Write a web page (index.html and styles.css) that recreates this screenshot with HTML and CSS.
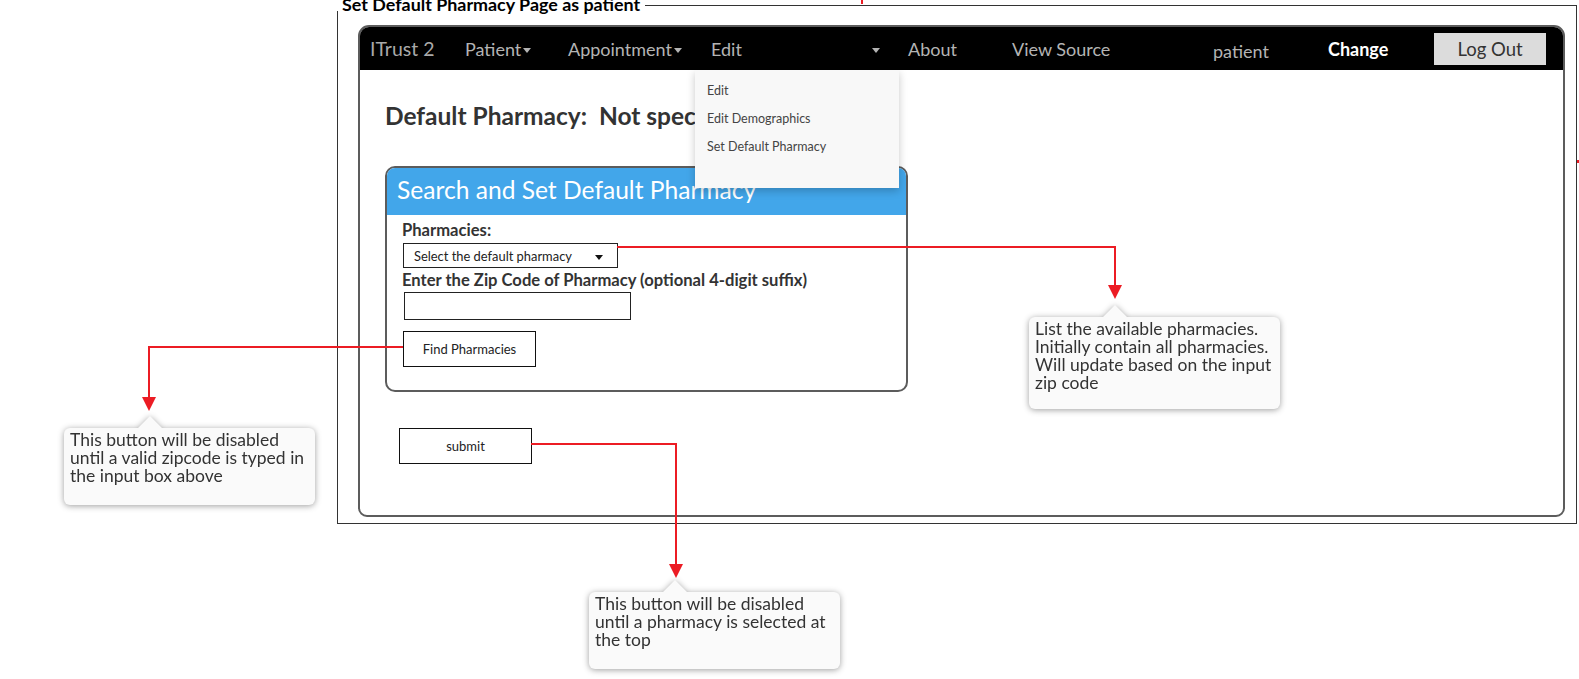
FILE: index.html
```html
<!DOCTYPE html>
<html lang="en">
<head>
<meta charset="utf-8">
<title>Set Default Pharmacy Page as patient</title>
<link rel="stylesheet" href="styles.css">
</head>
<body>
<div class="canvas">
  <div class="frame">
    <div class="frame-title">Set Default Pharmacy Page as patient</div>
    <div class="app">
      <nav class="navbar">
        <span class="nav-item n-brand">ITrust 2</span>
        <span class="nav-item n-patient">Patient<i class="caret"></i></span>
        <span class="nav-item n-appt">Appointment<i class="caret"></i></span>
        <span class="nav-item n-edit">Edit</span>
        <span class="nav-item n-caret"><i class="caret"></i></span>
        <span class="nav-item n-about">About</span>
        <span class="nav-item n-source">View Source</span>
        <span class="nav-item n-user">patient</span>
        <span class="nav-item n-change">Change</span>
        <span class="logout">Log Out</span>
      </nav>
      <div class="content">
        <h1 class="heading">Default Pharmacy:&nbsp; Not specified</h1>
        <div class="panel">
          <div class="panel-head">Search and Set Default Pharmacy</div>
          <div class="panel-body">
            <div class="label">Pharmacies:</div>
            <div class="select"><span>Select the default pharmacy</span><i class="caret caret-dark"></i></div>
            <div class="label label-zip">Enter the Zip Code of Pharmacy (optional 4-digit suffix)</div>
            <input class="zip" type="text">
            <button class="btn btn-find">Find Pharmacies</button>
          </div>
        </div>
        <button class="btn btn-submit">submit</button>
      </div>
      <div class="menu">
        <div class="menu-item">Edit</div>
        <div class="menu-item">Edit Demographics</div>
        <div class="menu-item">Set Default Pharmacy</div>
      </div>
    </div>
  </div>

  <svg class="wires" width="1579" height="679" viewBox="0 0 1579 679">
    <g fill="none" stroke="#ec1c24" stroke-width="2">
      <polyline points="617,247 1115,247 1115,286"/>
      <polyline points="403,347 149,347 149,398"/>
      <polyline points="531,444 676,444 676,565"/>
      <line x1="862" y1="0" x2="862" y2="4"/>
    </g>
    <g fill="#ec1c24">
      <polygon points="1108,285 1122,285 1115,299"/>
      <polygon points="142,397 156,397 149,411"/>
      <polygon points="669,564 683,564 676,578"/>
      <rect x="1577" y="160" width="2" height="3"/>
    </g>
  </svg>

  <div class="callout callout-list">List the available pharmacies.<br>Initially contain all pharmacies.<br>Will update based on the input<br>zip code</div>
  <div class="callout callout-find">This button will be disabled<br>until a valid zipcode is typed in<br>the input box above</div>
  <div class="callout callout-submit">This button will be disabled<br>until a pharmacy is selected at<br>the top</div>
</div>
</body>
</html>
```

FILE: styles.css
```css
html, body {
  margin: 0;
  padding: 0;
  background: #ffffff;
}

body {
  width: 1579px;
  height: 679px;
  overflow: hidden;
  font-family: "Lato", "Noto Sans", sans-serif;
  color: #333;
}

.canvas {
  position: relative;
  width: 1579px;
  height: 679px;
  box-sizing: border-box;
  padding: 5px 0 0 337px;
}

/* outer wireframe frame */
.frame {
  position: relative;
  width: 1240px;
  height: 519px;
  box-sizing: border-box;
  border: 1px solid #333;
  padding: 19px 0 0 20px;
}

.frame-title {
  position: absolute;
  left: -1px;
  top: -9px;
  padding: 0 5px 0 5px;
  background: #fff;
  font-weight: 700;
  font-size: 17.9px;
  line-height: 14px;
  color: #000;
  white-space: nowrap;
}

/* app window */
.app {
  position: relative;
  width: 1207px;
  height: 492px;
  box-sizing: border-box;
  border: 2px solid #5c5c5c;
  border-radius: 11px 11px 9px 9px;
  overflow: hidden;
  background: #fff;
}

.navbar {
  height: 43px;
  background: #000;
  display: flex;
  align-items: center;
  padding-left: 10px;
}

.nav-item {
  flex: none;
  font-size: 18px;
  line-height: 22px;
  color: #b4b4b4;
  white-space: nowrap;
}

.n-brand { width: 95px; color: #a9a9a9; font-size: 19.5px; }
.n-patient { width: 103px; }
.n-appt { width: 143px; }
.n-edit { width: 159px; }
.n-caret { width: 38px; }
.n-about { width: 104px; }
.n-source { width: 201px; }
.n-user { width: 115px; padding-top: 4px; }
.n-change { width: 106px; color: #fff; font-weight: 700; }

.caret {
  display: inline-block;
  width: 0;
  height: 0;
  margin-left: 2px;
  vertical-align: middle;
  border-top: 5px solid #b4b4b4;
  border-left: 4px solid transparent;
  border-right: 4px solid transparent;
}

.logout {
  flex: none;
  width: 112px;
  height: 32px;
  background: #dcdcdc;
  color: #333;
  font-size: 18.5px;
  line-height: 32px;
  text-align: center;
}

/* dropdown menu overlay */
.menu {
  position: absolute;
  left: 335px;
  top: 43px;
  width: 204px;
  height: 118px;
  box-sizing: border-box;
  padding-top: 7px;
  background: #f8f8f8;
  box-shadow: 0 3px 8px rgba(0, 0, 0, 0.22);
}

.menu-item {
  padding-left: 12px;
  font-size: 12.5px;
  line-height: 28px;
  color: #444;
}

/* page content */
.content {
  padding: 32px 0 0 25px;
}

.heading {
  margin: 0;
  font-size: 24.5px;
  line-height: 28px;
  font-weight: 700;
  color: #333;
  white-space: nowrap;
}

.panel {
  margin-top: 36px;
  width: 523px;
  height: 226px;
  box-sizing: border-box;
  border: 2px solid #5c5c5c;
  border-radius: 10px;
  overflow: hidden;
}

.panel-head {
  height: 47px;
  background: #42a6ea;
  color: #fff;
  font-size: 24.6px;
  line-height: 44px;
  padding-left: 10px;
  white-space: nowrap;
}

.panel-body {
  padding: 6px 0 0 15px;
}

.label {
  font-size: 16.6px;
  line-height: 18px;
  font-weight: 700;
  color: #333;
  white-space: nowrap;
}

.label-zip {
  margin-top: 3px;
}

.select {
  margin: 4px 0 0 1px;
  width: 215px;
  height: 25px;
  box-sizing: border-box;
  border: 1px solid #222;
  display: flex;
  align-items: center;
  justify-content: space-between;
  padding: 0 14px 0 10px;
  font-size: 12.9px;
  color: #222;
  white-space: nowrap;
}

.caret-dark {
  border-top-color: #111;
  margin-top: 3px;
}

.zip {
  display: block;
  margin: 3px 0 0 2px;
  width: 227px;
  height: 28px;
  box-sizing: border-box;
  border: 1px solid #222;
  padding: 0;
  background: #fff;
  outline: none;
}

.btn {
  display: block;
  width: 133px;
  height: 36px;
  box-sizing: border-box;
  border: 1px solid #111;
  border-radius: 0;
  background: #fff;
  padding: 0;
  font-family: "Lato", "Noto Sans", sans-serif;
  font-size: 13px;
  color: #222;
  text-align: center;
}

.btn-find {
  margin: 11px 0 0 1px;
}

.btn-submit {
  margin: 36px 0 0 14px;
}

/* annotations */
.wires {
  position: absolute;
  left: 0;
  top: 0;
  pointer-events: none;
}

.callout {
  position: absolute;
  box-sizing: border-box;
  width: 251px;
  padding: 3px 6px 0 6px;
  background: #fafafa;
  border-radius: 6px;
  font-size: 17.5px;
  line-height: 18px;
  color: #333;
  white-space: nowrap;
  filter: drop-shadow(0 1px 3px rgba(0, 0, 0, 0.38));
}

.callout::before {
  content: "";
  position: absolute;
  left: 74px;
  top: -12px;
  width: 24px;
  height: 12px;
  background: #fafafa;
  clip-path: polygon(50% 0, 100% 100%, 0 100%);
}

.callout-list {
  left: 1029px;
  top: 317px;
  height: 92px;
}

.callout-find {
  left: 64px;
  top: 428px;
  height: 77px;
}

.callout-submit {
  left: 589px;
  top: 592px;
  height: 77px;
}
```
